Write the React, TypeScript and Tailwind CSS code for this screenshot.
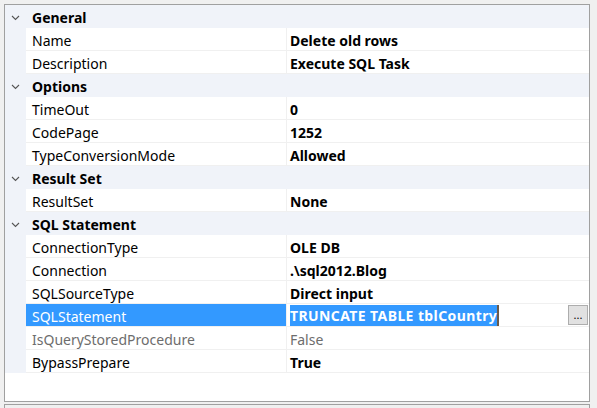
import React from "react";

type Row =
  | { kind: "cat"; label: string }
  | { kind: "prop"; name: string; value: string; dim?: boolean; selected?: boolean };

const rows: Row[] = [
  { kind: "cat", label: "General" },
  { kind: "prop", name: "Name", value: "Delete old rows" },
  { kind: "prop", name: "Description", value: "Execute SQL Task" },
  { kind: "cat", label: "Options" },
  { kind: "prop", name: "TimeOut", value: "0" },
  { kind: "prop", name: "CodePage", value: "1252" },
  { kind: "prop", name: "TypeConversionMode", value: "Allowed" },
  { kind: "cat", label: "Result Set" },
  { kind: "prop", name: "ResultSet", value: "None" },
  { kind: "cat", label: "SQL Statement" },
  { kind: "prop", name: "ConnectionType", value: "OLE DB" },
  { kind: "prop", name: "Connection", value: ".\\sql2012.Blog" },
  { kind: "prop", name: "SQLSourceType", value: "Direct input" },
  { kind: "prop", name: "SQLStatement", value: "TRUNCATE TABLE tblCountry", selected: true },
  { kind: "prop", name: "IsQueryStoredProcedure", value: "False", dim: true },
  { kind: "prop", name: "BypassPrepare", value: "True" },
];

function Chevron() {
  return (
    <svg width="9" height="6" viewBox="0 0 9 6" className="block">
      <path d="M1 1 L4.5 4.5 L8 1" fill="none" stroke="#555" strokeWidth="1.1" />
    </svg>
  );
}

export default function App() {
  return (
    <div
      className="w-[597px] h-[408px] bg-[#f0f0f0] pt-[4px] overflow-hidden text-[14px] leading-[21px] text-black"
      style={{ fontFamily: '"Noto Sans", "Open Sans", sans-serif' }}
    >
      <div className="ml-[4px] w-[586px] h-[398px] border border-[#a0a0a0] bg-white">
        {rows.map((r, i) =>
          r.kind === "cat" ? (
            <div key={i} className="flex h-[23px] bg-[#f0f3f9]">
              <div className="w-[21px] flex items-center justify-center pt-[2px]">
                <Chevron />
              </div>
              <div className="pl-[6px] pt-[2px] font-bold">{r.label}</div>
            </div>
          ) : (
            <div key={i} className="flex h-[23px]">
              <div className="w-[21px] bg-[#f0f3f9]" />
              <div
                className={
                  "w-[260px] pl-[6px] pt-[2px] border-b border-[#f0f0f0] " +
                  (r.selected ? "bg-[#3399ff] text-white" : r.dim ? "text-[#6d6d6d]" : "")
                }
              >
                {r.name}
              </div>
              <div className="w-[1px] bg-[#f0f0f0]" />
              <div className="flex-1 flex items-start border-b border-[#f0f0f0] pl-[3px] pr-[1px]">
                {r.selected ? (
                  <>
                    <span className="font-bold tracking-[0.4px] bg-[#3399ff] text-white h-[21px] mt-[1px] pt-[1px] leading-[20px] border-r-2 border-[#6b5a4a]">
                      {r.value}
                    </span>
                    <span className="flex-1" />
                    <span className="mt-[1px] w-[20px] h-[20px] bg-[#e1e1e1] border border-[#adadad] flex items-center justify-center text-[11px] leading-[12px]">
                      ...
                    </span>
                  </>
                ) : (
                  <span className={"pt-[2px] " + (r.dim ? "text-[#6d6d6d]" : "font-bold")}>{r.value}</span>
                )}
              </div>
            </div>
          )
        )}
      </div>
      <div className="ml-[4px] mt-[2px] w-[586px] h-[10px] border border-[#a0a0a0] bg-[#f0f0f0]" />
    </div>
  );
}
